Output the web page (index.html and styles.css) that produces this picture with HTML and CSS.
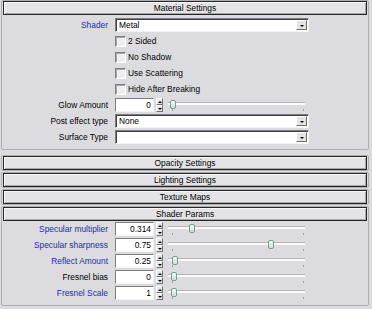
FILE: index.html
```html
<!DOCTYPE html>
<html lang="en">
<head>
    <meta charset="UTF-8">
    <title>Material Settings</title>
    <link rel="stylesheet" href="styles.css">
</head>
<body>
    <div class="rollout first">
        <div class="bar">Material Settings</div>
        <div class="params">
            <div class="row">
                <label class="lbl blue">Shader</label>
                <div class="combo"><span>Metal</span><i class="arrow"></i></div>
            </div>
            <div class="row">
                <span></span>
                <label class="check"><span class="box"></span>2 Sided</label>
            </div>
            <div class="row">
                <span></span>
                <label class="check"><span class="box"></span>No Shadow</label>
            </div>
            <div class="row">
                <span></span>
                <label class="check"><span class="box"></span>Use Scattering</label>
            </div>
            <div class="row">
                <span></span>
                <label class="check"><span class="box"></span>Hide After Breaking</label>
            </div>
            <div class="row">
                <label class="lbl">Glow Amount</label>
                <div class="spin-group">
                    <div class="num">0</div>
                    <div class="spinner"><b class="up"></b><b class="down"></b></div>
                    <div class="slider"><div class="thumb" style="left: 2px"></div></div>
                </div>
            </div>
            <div class="row">
                <label class="lbl">Post effect type</label>
                <div class="combo"><span>None</span><i class="arrow"></i></div>
            </div>
            <div class="row">
                <label class="lbl">Surface Type</label>
                <div class="combo"><span></span><i class="arrow"></i></div>
            </div>
        </div>
    </div>

    <div class="rollout"><div class="bar">Opacity Settings</div></div>
    <div class="rollout"><div class="bar">Lighting Settings</div></div>
    <div class="rollout"><div class="bar">Texture Maps</div></div>

    <div class="rollout">
        <div class="bar">Shader Params</div>
        <div class="params tight">
            <div class="row">
                <label class="lbl blue">Specular multiplier</label>
                <div class="spin-group">
                    <div class="num">0.314</div>
                    <div class="spinner"><b class="up"></b><b class="down"></b></div>
                    <div class="slider"><div class="thumb" style="left: 21px"></div></div>
                </div>
            </div>
            <div class="row">
                <label class="lbl blue">Specular sharpness</label>
                <div class="spin-group">
                    <div class="num">0.75</div>
                    <div class="spinner"><b class="up"></b><b class="down"></b></div>
                    <div class="slider"><div class="thumb" style="left: 100px"></div></div>
                </div>
            </div>
            <div class="row">
                <label class="lbl blue">Reflect Amount</label>
                <div class="spin-group">
                    <div class="num">0.25</div>
                    <div class="spinner"><b class="up"></b><b class="down"></b></div>
                    <div class="slider"><div class="thumb" style="left: 4px"></div></div>
                </div>
            </div>
            <div class="row">
                <label class="lbl">Fresnel bias</label>
                <div class="spin-group">
                    <div class="num">0</div>
                    <div class="spinner"><b class="up"></b><b class="down"></b></div>
                    <div class="slider"><div class="thumb" style="left: 3px"></div></div>
                </div>
            </div>
            <div class="row">
                <label class="lbl blue">Fresnel Scale</label>
                <div class="spin-group">
                    <div class="num">1</div>
                    <div class="spinner"><b class="up"></b><b class="down"></b></div>
                    <div class="slider"><div class="thumb" style="left: 3px"></div></div>
                </div>
            </div>
        </div>
    </div>
</body>
</html>
```

FILE: styles.css
```css
body {
    margin: 0;
    padding: 0 0 0 1px;
    background-color: #dcdce0;
    font: 8.4px "Liberation Sans", Arial, sans-serif;
    color: #000;
}

.rollout {
    box-sizing: border-box;
    width: 368px;
    border: 1px solid #aeaeb2;
    border-radius: 2px;
    padding: 0 1px;
    margin-bottom: 1px;
}

.rollout.first {
    margin-bottom: 5px;
}

.bar {
    box-sizing: border-box;
    height: 14px;
    line-height: 12px;
    text-align: center;
    border: 1px solid #262626;
    background-color: #e4e4e6;
    box-shadow: inset 1px 1px #f8f8f8, inset -1px -1px #a8a8a8;
}

.params {
    padding: 2px 0 4px;
}

.params.tight {
    padding: 0 0 4px;
}

.row {
    display: grid;
    grid-template-columns: 105px auto;
    column-gap: 7px;
    height: 16px;
    align-items: center;
}

.lbl {
    text-align: right;
    white-space: nowrap;
}

.blue {
    color: #2626c4;
}

.combo {
    box-sizing: border-box;
    display: flex;
    align-items: center;
    justify-content: space-between;
    width: 194px;
    height: 14px;
    padding: 0 1px 0 3px;
    background-color: #fff;
    border: 1px solid;
    border-color: #7c7c7c #f4f4f4 #f4f4f4 #7c7c7c;
    box-shadow: inset 1px 1px #404040;
}

.arrow {
    box-sizing: border-box;
    display: flex;
    align-items: center;
    justify-content: center;
    width: 11px;
    height: 10px;
    background-color: #e4e4e6;
    border: 1px solid;
    border-color: #fff #6c6c6c #6c6c6c #fff;
}

.arrow::after {
    content: "";
    border-left: 2px solid transparent;
    border-right: 2px solid transparent;
    border-top: 2px solid #000;
    margin-top: 1px;
}

.check {
    display: flex;
    align-items: center;
    gap: 2px;
}

.box {
    box-sizing: border-box;
    width: 11px;
    height: 11px;
    background-color: #eeeef0;
    border: 1px solid;
    border-color: #7c7c7c #fff #fff #7c7c7c;
    box-shadow: inset 1px 1px #a8a8ac;
}

.spin-group {
    display: flex;
    align-items: center;
}

.num {
    box-sizing: border-box;
    width: 39px;
    height: 14px;
    line-height: 12px;
    padding-right: 2px;
    text-align: right;
    background-color: #fff;
    border: 1px solid;
    border-color: #7c7c7c #f4f4f4 #f4f4f4 #7c7c7c;
}

.spinner {
    display: flex;
    flex-direction: column;
    margin-left: 2px;
}

.spinner b {
    box-sizing: border-box;
    display: flex;
    align-items: center;
    justify-content: center;
    width: 7px;
    height: 7px;
    background-color: #e8e8ea;
    border: 1px solid;
    border-color: #fff #707070 #707070 #fff;
}

.spinner .up::after {
    content: "";
    border-left: 2px solid transparent;
    border-right: 2px solid transparent;
    border-bottom: 2px solid #000;
}

.spinner .down::after {
    content: "";
    border-left: 2px solid transparent;
    border-right: 2px solid transparent;
    border-top: 2px solid #000;
}

.slider {
    position: relative;
    width: 137px;
    height: 16px;
    margin-left: 5px;
}

.slider::before {
    content: "";
    position: absolute;
    left: 0;
    right: 0;
    top: 5px;
    height: 2px;
    background-color: #fafafa;
    border-top: 1px solid #b4b4b8;
}

.slider::after {
    content: "";
    position: absolute;
    left: 4px;
    top: 12px;
    width: 1px;
    height: 2px;
    background-color: #a0a0a4;
    box-shadow: 131px 0 #a0a0a4;
}

.thumb {
    box-sizing: border-box;
    position: absolute;
    top: 3px;
    width: 6px;
    height: 9px;
    border: 1px solid #7c9a8e;
    border-radius: 2px;
    background: linear-gradient(#f6faf8, #cfdcd6);
}
```
